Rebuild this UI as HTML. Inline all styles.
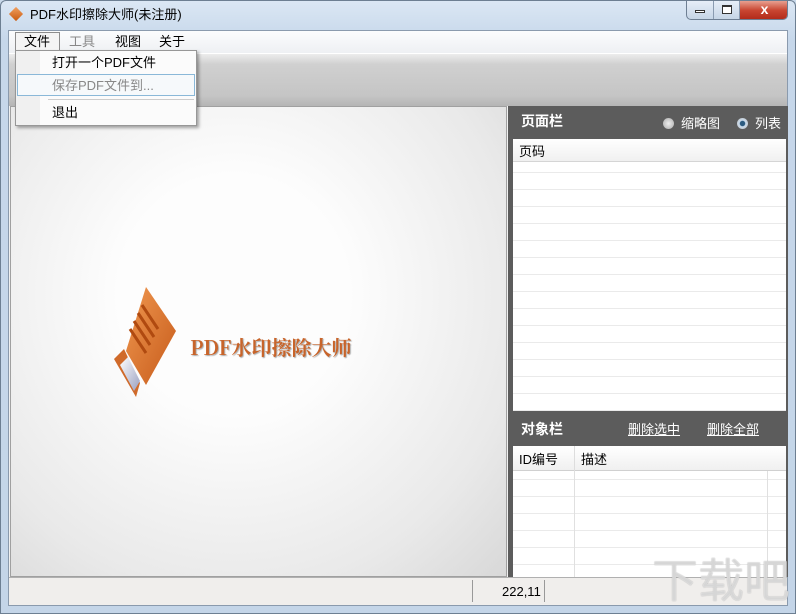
<!DOCTYPE html><html><head><meta charset="utf-8"><style>
*{margin:0;padding:0;box-sizing:border-box}
html,body{width:796px;height:614px;overflow:hidden}
body{font-family:"Liberation Sans","Noto Sans CJK SC",sans-serif;font-size:13px;line-height:15px;background:#c9d9ea;position:relative}
.a{position:absolute;white-space:nowrap}
</style></head><body>
<div class="a" style="left:0;top:0;width:796px;height:614px;background:linear-gradient(#dbe7f4,#c6d7ea 40px,#c4d5e8);border:1px solid #6d7f92;border-radius:6px 6px 0 0"></div>
<div class="a" style="left:11px;top:9px;width:10px;height:10px;transform:rotate(45deg);background:linear-gradient(135deg,#f0a060,#c85a10)"></div>
<div class="a" style="left:30px;top:7px;font-size:13px;color:#000">PDF水印擦除大师(未注册)</div>
<div class="a" style="left:686px;top:1px;width:102px;height:19px;border:1px solid #6e7f93;border-top:none;border-radius:0 0 5px 5px;background:linear-gradient(#e6eef8,#c6d5e6);overflow:hidden">
<div class="a" style="left:0;top:0;width:27px;height:19px;border-right:1px solid #8a9bb0"><div class="a" style="left:8px;top:9px;width:10px;height:3px;border:1px solid #333;background:#fff"></div></div>
<div class="a" style="left:27px;top:0;width:26px;height:19px;border-right:1px solid #8a9bb0"><div class="a" style="left:8px;top:4px;width:10px;height:9px;border:1px solid #333;border-top-width:2px;background:#fff"></div></div>
<div class="a" style="left:53px;top:0;width:49px;height:19px;background:linear-gradient(#e8a090,#c84530 50%,#b02818);color:#fff;font-weight:bold;text-align:center;line-height:17px;font-size:14px">x</div></div>
<div class="a" style="left:8px;top:30px;width:780px;height:576px;background:#f0f0f0;border:1px solid #8a9aad"></div>
<div class="a" style="left:9px;top:31px;width:778px;height:22px;background:linear-gradient(#fbfcfd,#eef0f3)"></div>
<div class="a" style="left:15px;top:32px;width:45px;height:19px;border:1px solid #8d8d8d;border-bottom:none;background:#f4f4f4"></div>
<div class="a" style="left:24px;top:34px">文件</div><div class="a" style="left:69px;top:34px;color:#888">工具</div><div class="a" style="left:115px;top:34px">视图</div><div class="a" style="left:159px;top:34px">关于</div>
<div class="a" style="left:9px;top:53px;width:778px;height:53px;background:linear-gradient(#ececec,#d0d0d0 20%,#c5c5c5 80%,#b5b5b5);border-top:1px solid #fff"></div>
<div class="a" style="left:10px;top:106px;width:497px;height:471px;background:radial-gradient(ellipse at 45% 40%,#fdfdfd 30%,#e9e9e9 75%,#d8d8d8);border:1px solid #a0a0a0"></div>
<svg class="a" style="left:110px;top:285px" width="70" height="118" viewBox="0 0 70 118">
<defs><linearGradient id="o" x1="0" y1="0" x2="1" y2="1"><stop offset="0" stop-color="#f09850"/><stop offset="1" stop-color="#c65a1a"/></linearGradient><linearGradient id="g" x1="0" y1="0" x2="1" y2="1"><stop offset="0" stop-color="#fff"/><stop offset="1" stop-color="#9aa0c0"/></linearGradient></defs>
<polygon points="36,2 66,46 36,100 16,66" fill="url(#o)"/>
<polygon points="14,64 30,98 26,112 4,74" fill="#d06a2a"/>
<polygon points="18,72 30,96 24,106 10,80" fill="url(#g)"/>
<g stroke="#b04a10" stroke-width="3"><line x1="32" y1="20" x2="48" y2="44"/><line x1="28" y1="28" x2="44" y2="52"/><line x1="24" y1="36" x2="40" y2="60"/><line x1="20" y1="44" x2="36" y2="68"/></g></svg>
<div class="a" style="left:190px;top:335px;font-family:'Noto Serif CJK SC','Liberation Serif',serif;font-size:20px;line-height:24px;font-weight:bold;color:#c8642a;text-shadow:1px 1px 1px #aaa">PDF水印擦除大师</div>
<div class="a" style="left:508px;top:106px;width:280px;height:471px;background:#5c5c5c"></div>
<div class="a" style="left:521px;top:114px;color:#fff;font-weight:bold;font-size:14px">页面栏</div>
<div class="a" style="left:663px;top:118px;width:11px;height:11px;border-radius:50%;background:radial-gradient(#eee,#aaa)"></div>
<div class="a" style="left:681px;top:116px;color:#fff">缩略图</div>
<div class="a" style="left:737px;top:118px;width:11px;height:11px;border-radius:50%;background:radial-gradient(#2a5a80 30%,#cde 40%,#bbb)"></div>
<div class="a" style="left:755px;top:116px;color:#fff">列表</div>
<div class="a" style="left:513px;top:139px;width:273px;height:272px;background:repeating-linear-gradient(#fff 0 16px,#eaeaea 16px 17px)"></div>
<div class="a" style="left:513px;top:139px;width:273px;height:23px;background:linear-gradient(#fff,#f0f0f0);border-bottom:1px solid #d5d5d5"></div>
<div class="a" style="left:519px;top:144px">页码</div>
<div class="a" style="left:521px;top:422px;color:#fff;font-weight:bold;font-size:14px">对象栏</div>
<div class="a" style="left:628px;top:422px;color:#fff;text-decoration:underline">删除选中</div>
<div class="a" style="left:707px;top:422px;color:#fff;text-decoration:underline">删除全部</div>
<div class="a" style="left:513px;top:446px;width:273px;height:131px;background:repeating-linear-gradient(#fff 0 16px,#eaeaea 16px 17px)"></div>
<div class="a" style="left:574px;top:446px;width:1px;height:131px;background:#e0e0e0"></div>
<div class="a" style="left:767px;top:446px;width:1px;height:131px;background:#e0e0e0"></div>
<div class="a" style="left:513px;top:446px;width:273px;height:25px;background:linear-gradient(#fff,#f0f0f0);border-bottom:1px solid #d0d0d0"></div>
<div class="a" style="left:574px;top:446px;width:1px;height:25px;background:#ddd"></div>
<div class="a" style="left:519px;top:452px">ID编号</div><div class="a" style="left:581px;top:452px">描述</div>
<div class="a" style="left:9px;top:577px;width:778px;height:28px;background:#f0eeec;border-top:1px solid #b0b0b0"></div>
<div class="a" style="left:472px;top:580px;width:1px;height:22px;background:#999"></div>
<div class="a" style="left:544px;top:580px;width:1px;height:22px;background:#999"></div>
<div class="a" style="left:502px;top:584px">222,11</div>
<div class="a" style="left:652px;top:556px;font-size:46px;line-height:50px;color:rgba(255,255,255,.6);text-shadow:0 0 1px #999">下载吧</div>
<div class="a" style="left:15px;top:50px;width:182px;height:76px;background:#fbfbfb;border:1px solid #979797;box-shadow:2px 2px 3px rgba(0,0,0,.35)"></div>
<div class="a" style="left:16px;top:51px;width:24px;height:74px;background:#f0f0f0"></div>
<div class="a" style="left:52px;top:55px">打开一个PDF文件</div>
<div class="a" style="left:17px;top:74px;width:178px;height:22px;border:1px solid #8ab8d8;background:#f6f9fb"></div>
<div class="a" style="left:52px;top:78px;color:#888">保存PDF文件到...</div>
<div class="a" style="left:48px;top:99px;width:146px;height:1px;background:#ccc"></div>
<div class="a" style="left:52px;top:105px">退出</div>
</body></html>
